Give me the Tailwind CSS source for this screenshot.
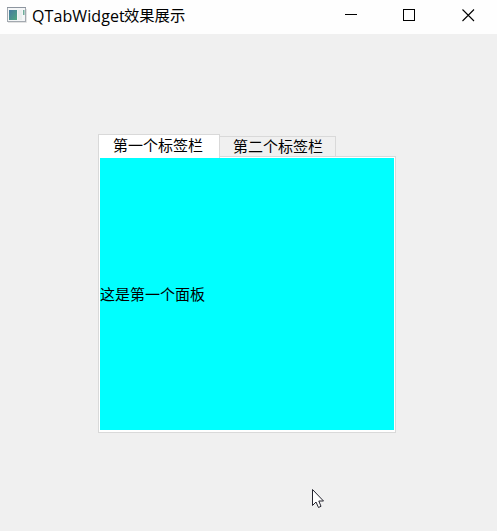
<!DOCTYPE html>
<html lang="zh-CN">
<head>
<meta charset="utf-8">
<title>QTabWidget效果展示</title>
<script src="https://cdn.jsdelivr.net/npm/@tailwindcss/browser@4"></script>
</head>
<body class="w-[497px] h-[531px] overflow-hidden bg-[#f0f0f0] text-black flex flex-col relative font-['Noto_Sans_CJK_SC',sans-serif]">
  <header class="h-[34px] shrink-0 bg-[#fefefe] flex items-start">
    <svg class="ml-[7px] mt-[7px] shrink-0" width="20" height="16" viewBox="0 0 20 16">
      <defs><linearGradient id="g" x1="0" y1="0" x2="1" y2="1"><stop offset="0" stop-color="#4679a0"/><stop offset="1" stop-color="#4fa781"/></linearGradient></defs>
      <rect x=".5" y=".5" width="18" height="14" fill="#f4f6f7" stroke="#a3a9b0"/>
      <path d="M0 .5H19" stroke="#8d959f"/>
      <path d="M1 15.5H19.5V2" fill="none" stroke="#e2e2e2"/>
      <rect x="2" y="3" width="8" height="10" fill="url(#g)"/>
      <rect x="11" y="3" width="4" height="10" fill="#e9eeee"/>
      <rect x="16" y="3" width="1.5" height="5" fill="#6fae9c"/>
    </svg>
    <h1 class="ml-[5px] mt-[4px] h-6 leading-6 whitespace-nowrap flex"><span class="text-[16px] w-[92px] tracking-[0.1px] font-['Open_Sans',sans-serif]">QTabWidget</span><span class="text-[15.3px] -mt-[2px]">效果展示</span></h1>
    <div class="ml-auto mr-[22px] mt-[9px] flex">
      <svg width="13" height="13"><path d="M0 5.5H12" stroke="#000"/></svg>
      <svg class="ml-[45px]" width="12" height="13"><rect x=".5" y=".5" width="11" height="11" fill="none" stroke="#000"/></svg>
      <svg class="ml-[47px]" width="13" height="13"><path d="M.5 .5L12 12M12 .5L.5 12" stroke="#000" stroke-width="1.1"/></svg>
    </div>
  </header>
  <main class="ml-[98px] mt-[100px] w-[298px] text-[15px] leading-5">
    <div class="flex items-end h-[22px]">
      <div class="relative z-10 w-[122px] h-[24px] -mb-[2px] shrink-0 bg-white border border-b-0 border-[#d9d9d9] pl-[14px] whitespace-nowrap">第一个标签栏</div>
      <div class="w-[116px] h-[20px] shrink-0 border border-l-0 border-b-0 border-[#d9d9d9] pl-[13px] whitespace-nowrap leading-[18px]">第二个标签栏</div>
    </div>
    <section class="h-[277px] bg-white border border-[#d9d9d9] p-px">
      <div class="h-[272px] w-[294px] bg-[#00ffff] flex items-center"><p>这是第一个面板</p></div>
    </section>
  </main>
  <svg class="absolute left-[311px] top-[488px]" width="15" height="22" viewBox="0 0 15 22"><path d="M1.5 1.5V17.5L5 14L7.5 19.5L10 18.3L7.8 13H12.5Z" fill="#fff" stroke="#25252f"/></svg>
</body>
</html>
